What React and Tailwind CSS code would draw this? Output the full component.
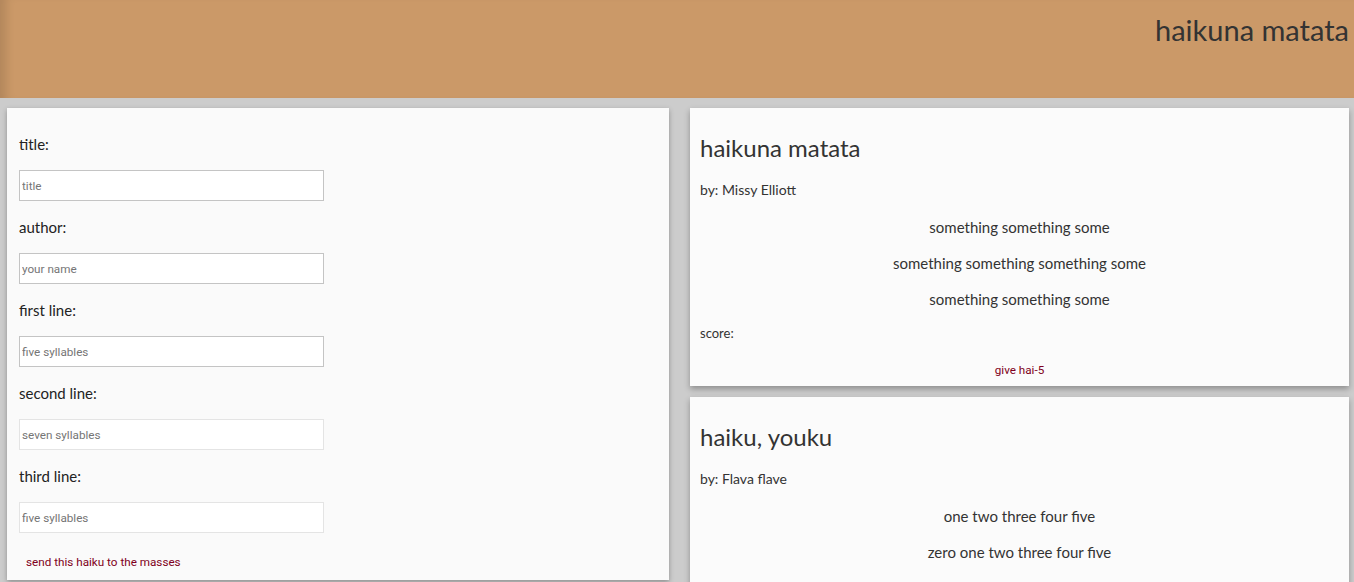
import { useState } from 'react';

const haikus = [
  {
    title: 'haikuna matata',
    author: 'Missy Elliott',
    lines: ['something something some', 'something something something some', 'something something some'],
  },
  {
    title: 'haiku, youku',
    author: 'Flava flave',
    lines: ['one two three four five', 'zero one two three four five', 'one two three four five'],
  },
];

const fields = [
  { name: 'title', label: 'title:', placeholder: 'title', dark: true },
  { name: 'author', label: 'author:', placeholder: 'your name', dark: true },
  { name: 'first', label: 'first line:', placeholder: 'five syllables', dark: true },
  { name: 'second', label: 'second line:', placeholder: 'seven syllables', dark: false },
  { name: 'third', label: 'third line:', placeholder: 'five syllables', dark: false },
];

const HaikuCard = ({ haiku }) => (
  <div className="bg-[#fbfbfb] shadow-[0_3px_6px_rgba(0,0,0,0.3)] px-[10px] pt-[22px] pb-[10px] text-[#333]">
    <h2 className="text-[24px] leading-[36px] mb-[12px]">{haiku.title}</h2>
    <p className="text-[14px] leading-[24px] mb-[13px]">by: {haiku.author}</p>
    {haiku.lines.map((line, i) => (
      <p key={i} className="text-[15px] leading-[24px] text-center mb-[12px]">
        {line}
      </p>
    ))}
    <p className="text-[13px] leading-[20px] mt-[1px] mb-[21px]">score:</p>
    <button className="block mx-auto text-[11.7px] leading-[12px] text-[#800020] font-['Roboto',sans-serif]">
      give hai-5
    </button>
  </div>
);

const App = () => {
  const [form, setForm] = useState({ title: '', author: '', first: '', second: '', third: '' });

  const handleChange = (e) => {
    setForm({ ...form, [e.target.name]: e.target.value });
  };

  return (
    <div className="h-[582px] overflow-hidden bg-[#cccccc] font-['Lato',sans-serif]">
      <div className="h-[98px] bg-[#cb9968] flex justify-end pr-[5px] pt-[12px] shadow-[inset_12px_0_10px_-6px_rgba(0,0,0,0.12)]">
        <h1 className="text-[29px] leading-[36px] text-[#333]">haikuna matata</h1>
      </div>

      <div className="flex pt-[10px]">
        <div className="w-[680px] pl-[7px] pr-[11px]">
          <form
            onSubmit={(e) => e.preventDefault()}
            className="bg-[#fafafa] shadow-[0_2px_5px_rgba(0,0,0,0.3)] pl-[12px] pt-[25px] pb-[6px] h-[472px]"
          >
            {fields.map((f) => (
              <div key={f.name} className="mb-[15px]">
                <label className="block text-[15px] leading-[22px] text-[#222] mb-[15px]">{f.label}</label>
                <input
                  type="text"
                  name={f.name}
                  value={form[f.name]}
                  onChange={handleChange}
                  placeholder={f.placeholder}
                  className={`block w-[305px] h-[31px] bg-white px-[2px] text-[11.7px] font-['Roboto',sans-serif] placeholder:text-[#757575] border ${
                    f.dark ? 'border-[#c4c4c4]' : 'border-[#e4e4e4]'
                  }`}
                />
              </div>
            ))}
            <button
              type="submit"
              className="ml-[7px] mt-[7px] text-[11.7px] leading-[14px] text-[#800020] font-['Roboto',sans-serif]"
            >
              send this haiku to the masses
            </button>
          </form>
        </div>

        <div className="w-[674px] pl-[10px] pr-[5px] flex flex-col gap-[11px]">
          {haikus.map((h) => (
            <HaikuCard key={h.title} haiku={h} />
          ))}
        </div>
      </div>
    </div>
  );
};

export default App;
